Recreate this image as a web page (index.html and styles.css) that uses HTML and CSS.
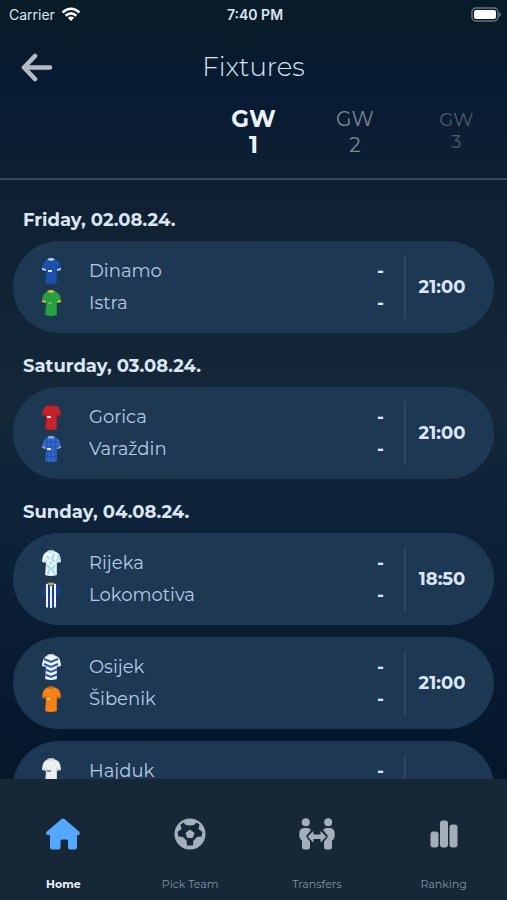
FILE: index.html
```html
<!DOCTYPE html>
<html lang="en">
<head>
    <meta charset="UTF-8">
    <meta name="viewport" content="width=device-width, initial-scale=1.0">
    <title>Fixtures</title>
    <link rel="stylesheet" href="styles.css">
</head>
<body>
    <!-- Shared shirt shape, coloured by the kit classes -->
    <svg class="defs" width="0" height="0" aria-hidden="true">
        <defs>
            <clipPath id="shirtClip">
                <path d="M7 2 Q10 3 13 2 L17 4 Q19 5 20 12 L16 13 L16 26 Q10 28 4 26 L5 13 L1 12 Q2 5 4 4 Z"/>
            </clipPath>
            <symbol id="shirt" viewBox="0 0 20 28">
                <path class="body" d="M7 2 Q10 3 13 2 L17 4 Q19 5 20 12 L16 13 L16 26 Q10 28 4 26 L5 13 L1 12 Q2 5 4 4 Z"/>
                <path class="trim" d="M1 11 L5 12 L5 14 L1 13 Z M20 11 L16 12 L16 14 L20 13 Z M6 2 Q10 0 14 2 Q12 4 10 4 Q8 4 6 2 Z"/>
                <path class="shade" d="M5 8 L6 13 L5 26 L4 26 Z M16 8 L15 13 L15 26 L16 26 Z"/>
            </symbol>
        </defs>
    </svg>

    <header class="top">
        <div class="status">
            <div class="carrier">
                <span>Carrier</span>
                <svg width="20" height="15" viewBox="0 0 20 15" fill="none" stroke="#fff" stroke-width="2.6" aria-hidden="true">
                    <path d="M1.5 5.5 Q10 -2 18.500 5.500"/>
                    <path d="M4.6 8.8 Q10 4 15.400 8.800"/>
                    <path d="M10 14 L6.800 10.800 Q10 8.300 13.200 10.800 Z" fill="#fff" stroke="none"/>
                </svg>
            </div>
            <time class="clock">7:40 PM</time>
            <svg class="battery" width="31" height="15" viewBox="0 0 31 15" aria-hidden="true">
                <rect x="2" y="1" width="26" height="13" rx="4" fill="none" stroke="#68747f" stroke-width="1.4"/>
                <rect x="4" y="3" width="22" height="9" rx="2" fill="#fff"/>
                <path d="M29 5 Q33 7.500 29 10 Z" fill="#68747f"/>
            </svg>
        </div>
        <div class="title-bar">
            <button class="back" type="button" aria-label="Back">
                <svg width="34" height="30" viewBox="0 0 34 30" fill="none" stroke="#b4bbc3" stroke-width="4.6" stroke-linecap="round" stroke-linejoin="round">
                    <path d="M15 4 L4 15.500 L15 27 M4 15.500 H30"/>
                </svg>
            </button>
            <h1>Fixtures</h1>
        </div>
        <nav class="weeks" aria-label="Gameweeks">
            <button class="week current" type="button">GW<br>1</button>
            <button class="week next" type="button">GW<br>2</button>
            <button class="week later" type="button">GW<br>3</button>
        </nav>
    </header>

    <main class="fixtures">
        <h2>Friday, 02.08.24.</h2>
        <article class="match">
            <ul class="teams">
                <li><svg class="kit dinamo"><use href="#shirt"/><path d="M7 13h4v2h-4z" fill="#dfe9f5"/></svg><span>Dinamo</span><b>-</b></li>
                <li><svg class="kit istra"><use href="#shirt"/><path d="M7 13l4 1v1h-3z" fill="#8dbb4a"/></svg><span>Istra</span><b>-</b></li>
            </ul>
            <time class="kickoff">21:00</time>
        </article>

        <h2>Saturday, 03.08.24.</h2>
        <article class="match">
            <ul class="teams">
                <li><svg class="kit gorica"><use href="#shirt"/><path d="M6 13h4v2h-4z" fill="#f3d9d9"/></svg><span>Gorica</span><b>-</b></li>
                <li>
                    <svg class="kit varazdin">
                        <use href="#shirt"/>
                        <path clip-path="url(#shirtClip)" d="M6 0V28M10 0V28M14 0V28M0 7H20M0 12H20M0 17H20M0 22H20" stroke="#234fa8"/>
                        <path d="M6 13h4v2h-4z" fill="#dfe9f5"/>
                    </svg>
                    <span>Varaždin</span><b>-</b>
                </li>
            </ul>
            <time class="kickoff">21:00</time>
        </article>

        <h2>Sunday, 04.08.24.</h2>
        <article class="match">
            <ul class="teams">
                <li>
                    <svg class="kit rijeka">
                        <use href="#shirt"/>
                        <path clip-path="url(#shirtClip)" d="M6 7l2 3M13 5l-2 5 3 3M6 16l3 3-2 6M14 16l-3 4 3 5M9 13l2 2M17 6l1 5" fill="none" stroke="#a3dae8" stroke-width="2"/>
                    </svg>
                    <span>Rijeka</span><b>-</b>
                </li>
                <li>
                    <svg class="kit lokomotiva">
                        <use href="#shirt"/>
                        <path clip-path="url(#shirtClip)" d="M6 3V28M10 5V28M14 3V28" stroke="#f1f5fa" stroke-width="2"/>
                        <path d="M6 2q4-1 8 0l-2 2q-2 1-4 0z" fill="#c9a52f"/>
                    </svg>
                    <span>Lokomotiva</span><b>-</b>
                </li>
            </ul>
            <time class="kickoff">18:50</time>
        </article>
        <article class="match">
            <ul class="teams">
                <li>
                    <svg class="kit osijek">
                        <use href="#shirt"/>
                        <path clip-path="url(#shirtClip)" d="M3 6l7 3 7-3M3 11l7 3 7-3M3 16l7 3 7-3M3 21l7 3 7-3" fill="none" stroke="#2a5cab" stroke-width="2"/>
                    </svg>
                    <span>Osijek</span><b>-</b>
                </li>
                <li><svg class="kit sibenik"><use href="#shirt"/><path d="M6 13h3v2h-3z" fill="#ffd09a"/></svg><span>Šibenik</span><b>-</b></li>
            </ul>
            <time class="kickoff">21:00</time>
        </article>
        <article class="match">
            <ul class="teams">
                <li><svg class="kit hajduk"><use href="#shirt"/><path d="M6 13h4v2h-4z" fill="#8b93a0"/></svg><span>Hajduk</span><b>-</b></li>
            </ul>
            <time class="kickoff"></time>
        </article>
    </main>

    <nav class="tabs" aria-label="Main">
        <a class="tab active" href="#home">
            <svg width="36" height="36" viewBox="0 0 36 36" fill="currentColor" aria-hidden="true">
                <path d="M16.500 3 Q18 1.800 19.500 3 L34.300 15.800 Q35.800 18 33.500 19 H32 V31 Q32 33.500 29.500 33.500 H25 Q23 33.500 23 31.500 V25 Q23 23.500 21.500 23.500 H17 Q15.500 23.500 15.500 25 V31.500 Q15.500 33.500 13.500 33.500 H7 Q5 33.500 5 31 V19 H2.500 Q.2 18 1.700 15.800 Z"/>
            </svg>
            <span>Home</span>
        </a>
        <a class="tab" href="#team">
            <svg width="36" height="36" viewBox="0 0 36 36" aria-hidden="true">
                <circle cx="18" cy="18" r="15.500" fill="currentColor"/>
                <path class="hole" d="M18 9.500 L22 9 L24.500 6.500 L27.500 8.500 L26.500 13 L30.500 16 L29.500 20.500 L25 21 L21.500 24.500 L21 29.500 H15 L14.500 24.500 L11 21 L6.500 20.500 L5.500 16 L9.500 13 L8.500 8.500 L11.500 6.500 L14 9 Z"/>
                <path d="M18 14 L22 17 L20.500 21.500 H15.500 L14 17 Z" fill="currentColor" stroke="currentColor" stroke-linejoin="round"/>
            </svg>
            <span>Pick Team</span>
        </a>
        <a class="tab" href="#transfers">
            <svg width="36" height="36" viewBox="0 0 36 36" fill="currentColor" aria-hidden="true">
                <circle cx="6.800" cy="6.200" r="4"/>
                <circle cx="29.200" cy="6.200" r="4"/>
                <path d="M5 12 H8.500 Q10.500 12.200 12 14 L7.500 19.500 Q7 21 8 22 L11 25.500 V31 Q11 33.500 8.500 33.500 H5.500 Q3 33.500 3 31 V24.500 Q.3 23 .3 20 V17 Q.5 12.500 5 12 Z"/>
                <path d="M31 12 H27.500 Q25.500 12.200 24 14 L28.500 19.500 Q29 21 28 22 L25 25.500 V31 Q25 33.500 27.500 33.500 H30.500 Q33 33.500 33 31 V24.500 Q35.700 23 35.700 20 V17 Q35.500 12.500 31 12 Z"/>
                <path d="M9.200 20.700 L14 15.700 V19 H22 V15.700 L26.800 20.700 L22 25.700 V22.500 H14 V25.700 Z" stroke="currentColor" stroke-linejoin="round"/>
            </svg>
            <span>Transfers</span>
        </a>
        <a class="tab" href="#ranking">
            <svg width="36" height="36" viewBox="0 0 36 36" fill="currentColor" aria-hidden="true">
                <rect x="4.500" y="15.500" width="8" height="16" rx="3"/>
                <rect x="14" y="4.500" width="8" height="27" rx="3"/>
                <rect x="23.500" y="8.500" width="8" height="23" rx="3"/>
            </svg>
            <span>Ranking</span>
        </a>
    </nav>
</body>
</html>
```
FILE: styles.css
```css
* {
    box-sizing: border-box;
}
body {
    margin: 0;
    height: 100vh;
    display: flex;
    flex-direction: column;
    overflow: hidden;
    background-color: #0b1c2f;
    color: #dce6f2;
    font-family: Montserrat, Inter, sans-serif;
}
.defs {
    position: absolute;
}
button {
    padding: 0;
    border: none;
    background: none;
    color: inherit;
    font: inherit;
    cursor: pointer;
}

/* Header */
.top {
    border-bottom: 2px solid #3a4a5a;
    background: linear-gradient(#081b28 15%, #071b34 50%, #0e2032);
}
.status {
    display: grid;
    grid-template-columns: 1fr auto 1fr;
    align-items: center;
    height: 28px;
    padding: 0 6px 0 9px;
    font-family: Inter, sans-serif;
    font-size: 14px;
}
.carrier {
    display: flex;
    align-items: center;
    gap: 6px;
}
.clock {
    font-weight: 600;
}
.battery {
    justify-self: end;
}
.title-bar {
    display: grid;
    grid-template-columns: 1fr auto 1fr;
    align-items: center;
    height: 78px;
    padding: 0 20px;
}
.back {
    justify-self: start;
    display: flex;
}
h1 {
    margin: 0;
    font-size: 26px;
    font-weight: 300;
}
.weeks {
    display: grid;
    grid-template-columns: repeat(5, 1fr);
    height: 72px;
    align-items: start;
}
.week {
    line-height: 26px;
}
.current {
    grid-column: 3;
    font-size: 23px;
    font-weight: 700;
    color: #edf2f8;
}
.next {
    font-size: 20px;
    color: #7d8a98;
}
.later {
    padding-top: 3px;
    font-size: 18px;
    line-height: 22px;
    color: #4f5e6e;
}

/* Fixture list */
.fixtures {
    flex: 1;
    min-height: 0;
    overflow-y: auto;
    scrollbar-width: none;
    padding: 19px 13px 0;
    background: linear-gradient(#0e2032, #14283a 38%, #0c2038 62%, #07192f 88%, #05172a);
}
h2 {
    margin: 0;
    padding: 0 10px;
    font-size: 18px;
    font-weight: 700;
    line-height: 42px;
}
.match {
    display: flex;
    align-items: center;
    height: 92px;
    margin-bottom: 12px;
    padding: 14px 0;
    border-radius: 46px;
    background-color: #1d3853;
}
.teams {
    flex: 1;
    align-self: stretch;
    margin: 0;
    padding: 0 20px 0 28px;
    border-right: 2px solid #2c4660;
    list-style: none;
}
.teams li {
    display: flex;
    align-items: center;
    height: 32px;
    font-size: 18px;
    color: #b5cbe2;
}
.teams span {
    flex: 1;
    padding-left: 28px;
}
.teams b {
    color: #dbeaf5;
}
.kickoff {
    width: 88px;
    padding-right: 16px;
    text-align: center;
    font-size: 18px;
    font-weight: 700;
}

/* Kits */
.kit {
    width: 20px;
    height: 28px;
}
.body {
    fill: currentColor;
}
.shade {
    fill: #000;
    opacity: 0.12;
}
.dinamo {
    color: #1b51a8;
    fill: #b9cbe4;
}
.istra {
    color: #26a041;
    fill: #d8bd2c;
}
.gorica {
    color: #c4232b;
    fill: #7b2230;
}
.varazdin {
    color: #356bd0;
    fill: #9ab6e6;
}
.rijeka {
    color: #e9f4f5;
    fill: #bfe2ea;
}
.lokomotiva {
    color: #173f91;
    fill: #173f91;
}
.osijek {
    color: #eff3f8;
    fill: #dce4ee;
}
.sibenik {
    color: #f58216;
    fill: #bd6420;
}
.hajduk {
    color: #eceef0;
    fill: #cfd3d8;
}

/* Bottom tabs */
.tabs {
    display: grid;
    grid-template-columns: repeat(4, 1fr);
    height: 121px;
    background-color: #162838;
}
.tab {
    display: flex;
    flex-direction: column;
    align-items: center;
    gap: 24px;
    padding-top: 37px;
    color: #a5afba;
    font-size: 11px;
    line-height: 16px;
    text-decoration: none;
}
.tab span {
    color: #8390a0;
}
.active {
    color: #55a8ff;
    font-weight: 700;
}
.active span {
    color: #f0f5fa;
}
.hole {
    fill: #162838;
}
```
